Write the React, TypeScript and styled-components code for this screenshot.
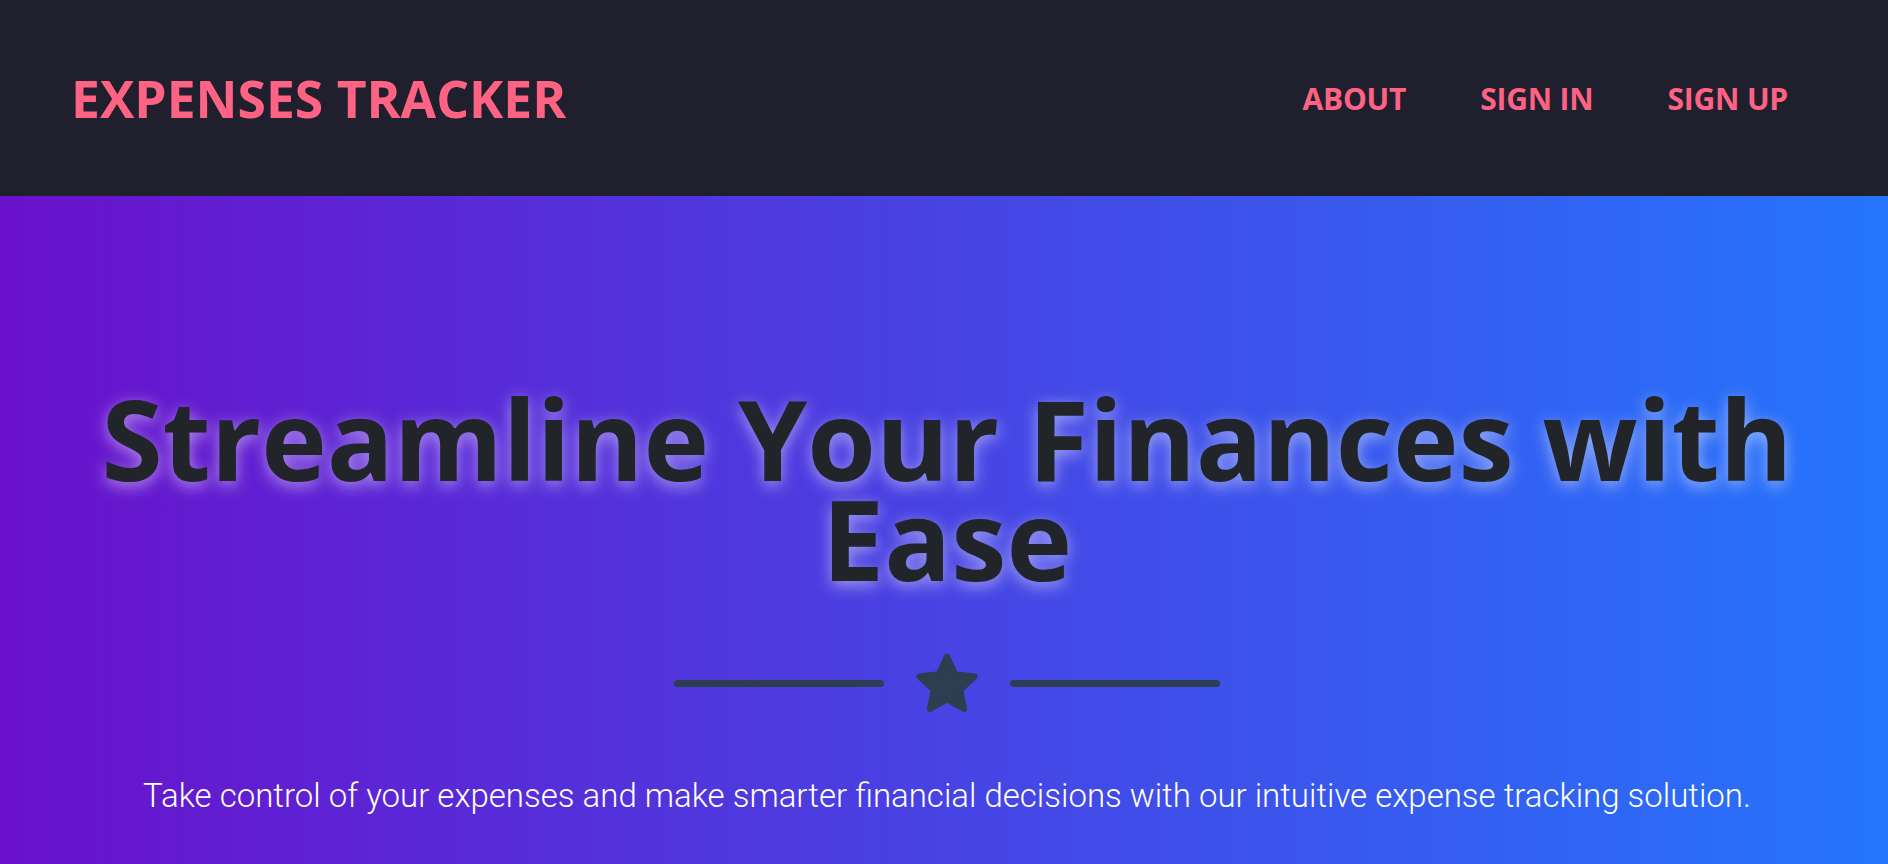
import React from 'react';
import styled, { createGlobalStyle } from 'styled-components';

const GlobalStyle = createGlobalStyle`
  * {
    box-sizing: border-box;
  }

  body {
    margin: 0;
    font-family: 'Open Sans', 'Noto Sans', sans-serif;
    background: #1f1f2e;
  }
`;

// Navbar
const NavLinks = ['About', 'Sign In', 'Sign Up'];

const Navbar: React.FC = () => (
  <Header>
    <Logo>Expenses Tracker</Logo>
    <Nav>
      {NavLinks.map((link) => (
        <NavLink key={link} href="#">
          {link}
        </NavLink>
      ))}
    </Nav>
  </Header>
);

const Header = styled.header`
  height: 196px;
  background-color: #1f1f2e;
  display: flex;
  align-items: center;
  justify-content: space-between;
  padding: 0 100px 0 71px;
`;

const Logo = styled.h1`
  margin: 0;
  font-size: 51.6px;
  font-weight: 700;
  color: #ff6384;
  text-transform: uppercase;
`;

const Nav = styled.nav`
  display: flex;
  gap: 74px;
`;

const NavLink = styled.a`
  font-size: 30px;
  font-weight: 700;
  color: #ff6384;
  text-decoration: none;
  text-transform: uppercase;
  letter-spacing: -0.2px;

  &:hover {
    color: #ff8fa6;
  }
`;

// Star divider
const Divider: React.FC = () => (
  <DividerRow>
    <Line />
    <svg width="66" height="64" viewBox="0 0 66 64">
      <polygon
        points={starPoints(33, 34.5, 29, 14)}
        fill="#2c3e50"
        stroke="#2c3e50"
        strokeWidth="6"
        strokeLinejoin="round"
      />
    </svg>
    <Line />
  </DividerRow>
);

function starPoints(cx: number, cy: number, outer: number, inner: number) {
  const pts: string[] = [];
  for (let i = 0; i < 10; i++) {
    const r = i % 2 === 0 ? outer : inner;
    const a = (Math.PI / 5) * i - Math.PI / 2;
    pts.push(`${(cx + r * Math.cos(a)).toFixed(2)},${(cy + r * Math.sin(a)).toFixed(2)}`);
  }
  return pts.join(' ');
}

const DividerRow = styled.div`
  display: flex;
  align-items: center;
  justify-content: center;
  gap: 30px;
  margin-top: 63px;
`;

const Line = styled.span`
  display: block;
  width: 210px;
  height: 7px;
  border-radius: 4px;
  background-color: #2c3e50;
`;

// Hero
const App: React.FC = () => (
  <>
    <GlobalStyle />
    <Navbar />
    <Hero>
      <Title>Streamline Your Finances with Ease</Title>
      <Divider />
      <Subtitle>
        Take control of your expenses and make smarter financial decisions with our intuitive
        expense tracking solution.
      </Subtitle>
    </Hero>
  </>
);

const Hero = styled.section`
  min-height: calc(100vh - 196px);
  background: linear-gradient(to right, #6a11cb, #2575fc);
  display: flex;
  flex-direction: column;
  align-items: center;
  padding: 192px 54px 80px 60px;
  text-align: center;
`;

const Title = styled.h2`
  margin: 0;
  max-width: 1740px;
  font-size: 111px;
  line-height: 100px;
  font-weight: 700;
  color: #212529;
  text-shadow: 0 4px 16px rgba(255, 255, 255, 0.5);
`;

const Subtitle = styled.p`
  margin: 61px 0 0;
  font-family: 'Roboto', sans-serif;
  font-weight: 300;
  font-size: 33px;
  color: #ffffff;
`;

export default App;
